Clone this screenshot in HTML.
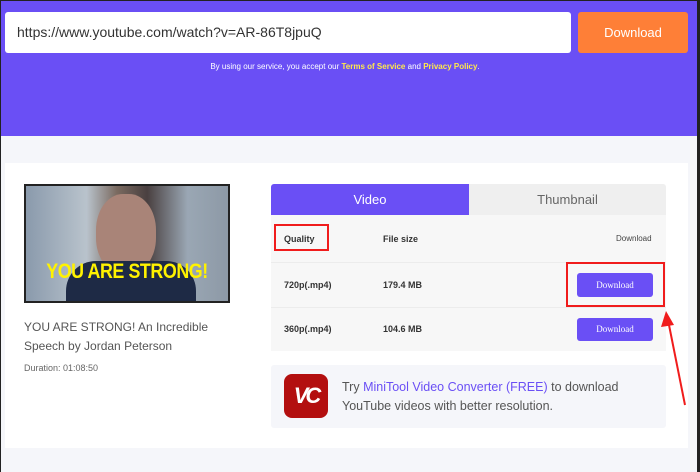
<!DOCTYPE html>
<html><head><meta charset="utf-8"><style>
*{margin:0;padding:0;box-sizing:border-box}
body{width:700px;height:472px;overflow:hidden;background:#f5f6fa;font-family:"Liberation Sans",sans-serif;position:relative}
.a{position:absolute}
</style></head><body>
<div class="a" style="left:0;top:0;width:700px;height:136px;background:#6a4ff5"></div>
<div class="a" style="left:5px;top:12px;width:566px;height:41px;background:#fff;border-radius:3px;font-size:14px;color:#333;padding:12px 0 0 12px">https://www.youtube.com/watch?v=AR-86T8jpuQ</div>
<div class="a" style="left:578px;top:12px;width:110px;height:41px;background:#fe7f37;border-radius:3px;color:#fff;font-size:13px;text-align:center;line-height:41px">Download</div>
<div class="a" style="left:0;top:62px;width:690px;text-align:center;font-size:8px;color:#fff">By using our service, you accept our <b style="color:#ffe94a">Terms of Service</b> and <b style="color:#ffe94a">Privacy Policy</b>.</div>
<div class="a" style="left:5px;top:163px;width:683px;height:285px;background:#fff"></div>
<div class="a" style="left:24px;top:184px;width:206px;height:119px;background:linear-gradient(90deg,#8a9aac 0%,#b9c3cc 30%,#7a6a60 45%,#4a4040 60%,#9aa7b4 80%,#8d99a6 100%);border:2px solid #222;overflow:hidden">
<div class="a" style="left:70px;top:8px;width:60px;height:80px;border-radius:45%;background:#a98478"></div>
<div class="a" style="left:40px;top:75px;width:130px;height:45px;background:#1e2a45;border-radius:30px 30px 0 0"></div>
<div class="a" style="left:0;top:74px;width:202px;text-align:center;font-size:21px;font-weight:bold;color:#fff200;transform:scaleX(.85);letter-spacing:-.5px">YOU ARE STRONG!</div>
</div>
<div class="a" style="left:24px;top:318px;width:220px;font-size:12px;line-height:19px;color:#555">YOU ARE STRONG! An Incredible Speech by Jordan Peterson</div>
<div class="a" style="left:24px;top:363px;font-size:9px;color:#666">Duration: 01:08:50</div>
<div class="a" style="left:271px;top:184px;width:198px;height:31px;background:#6a4ff5;border-radius:3px 0 0 0;color:#fff;font-size:13px;text-align:center;line-height:31px">Video</div>
<div class="a" style="left:469px;top:184px;width:197px;height:31px;background:#efefef;border-radius:0 3px 0 0;color:#666;font-size:13px;text-align:center;line-height:31px">Thumbnail</div>
<div class="a" style="left:271px;top:215px;width:395px;height:136px;background:#f7f7f7"></div>
<div class="a" style="left:271px;top:262px;width:395px;height:1px;background:#ececec"></div>
<div class="a" style="left:271px;top:307px;width:395px;height:1px;background:#ececec"></div>
<div class="a" style="left:284px;top:234px;font-size:9px;font-weight:bold;color:#333">Quality</div>
<div class="a" style="left:383px;top:234px;font-size:9px;font-weight:bold;color:#333">File size</div>
<div class="a" style="left:616px;top:234px;font-size:8px;color:#444">Download</div>
<div class="a" style="left:284px;top:280px;font-size:9px;font-weight:bold;color:#333">720p(.mp4)</div>
<div class="a" style="left:383px;top:280px;font-size:9px;font-weight:bold;color:#333">179.4 MB</div>
<div class="a" style="left:284px;top:324px;font-size:9px;font-weight:bold;color:#333">360p(.mp4)</div>
<div class="a" style="left:383px;top:324px;font-size:9px;font-weight:bold;color:#333">104.6 MB</div>
<div class="a" style="left:577px;top:273px;width:76px;height:24px;background:#6a4ff5;border-radius:3px;color:#fff;font:9px 'Liberation Serif',serif;text-align:center;line-height:24px">Download</div>
<div class="a" style="left:577px;top:318px;width:76px;height:23px;background:#6a4ff5;border-radius:3px;color:#fff;font:9px 'Liberation Serif',serif;text-align:center;line-height:23px">Download</div>
<div class="a" style="left:274px;top:224px;width:55px;height:27px;border:2px solid #f01c1c"></div>
<div class="a" style="left:566px;top:262px;width:99px;height:45px;border:2px solid #f01c1c"></div>
<svg class="a" style="left:655px;top:305px" width="40" height="105"><line x1="30" y1="100" x2="13" y2="15" stroke="#f01c1c" stroke-width="2"/><polygon points="11,6 6,22 19,20" fill="#f01c1c"/></svg>
<div class="a" style="left:271px;top:365px;width:395px;height:63px;background:#f5f6fa;border-radius:3px"></div>
<div class="a" style="left:284px;top:374px;width:44px;height:44px;background:#b30f0f;border-radius:8px;color:#fff;font-weight:bold;font-size:22px;line-height:44px;text-align:center;font-style:italic;letter-spacing:-3px">VC</div>
<div class="a" style="left:342px;top:378px;width:320px;font-size:12.5px;line-height:19px;color:#555">Try <span style="color:#6a4ff5">MiniTool Video Converter (FREE)</span> to download YouTube videos with better resolution.</div>
<div class="a" style="left:0;top:0;width:700px;height:472px;border:1px solid #222;border-right:3px solid #222;border-bottom:none"></div>
</body></html>
